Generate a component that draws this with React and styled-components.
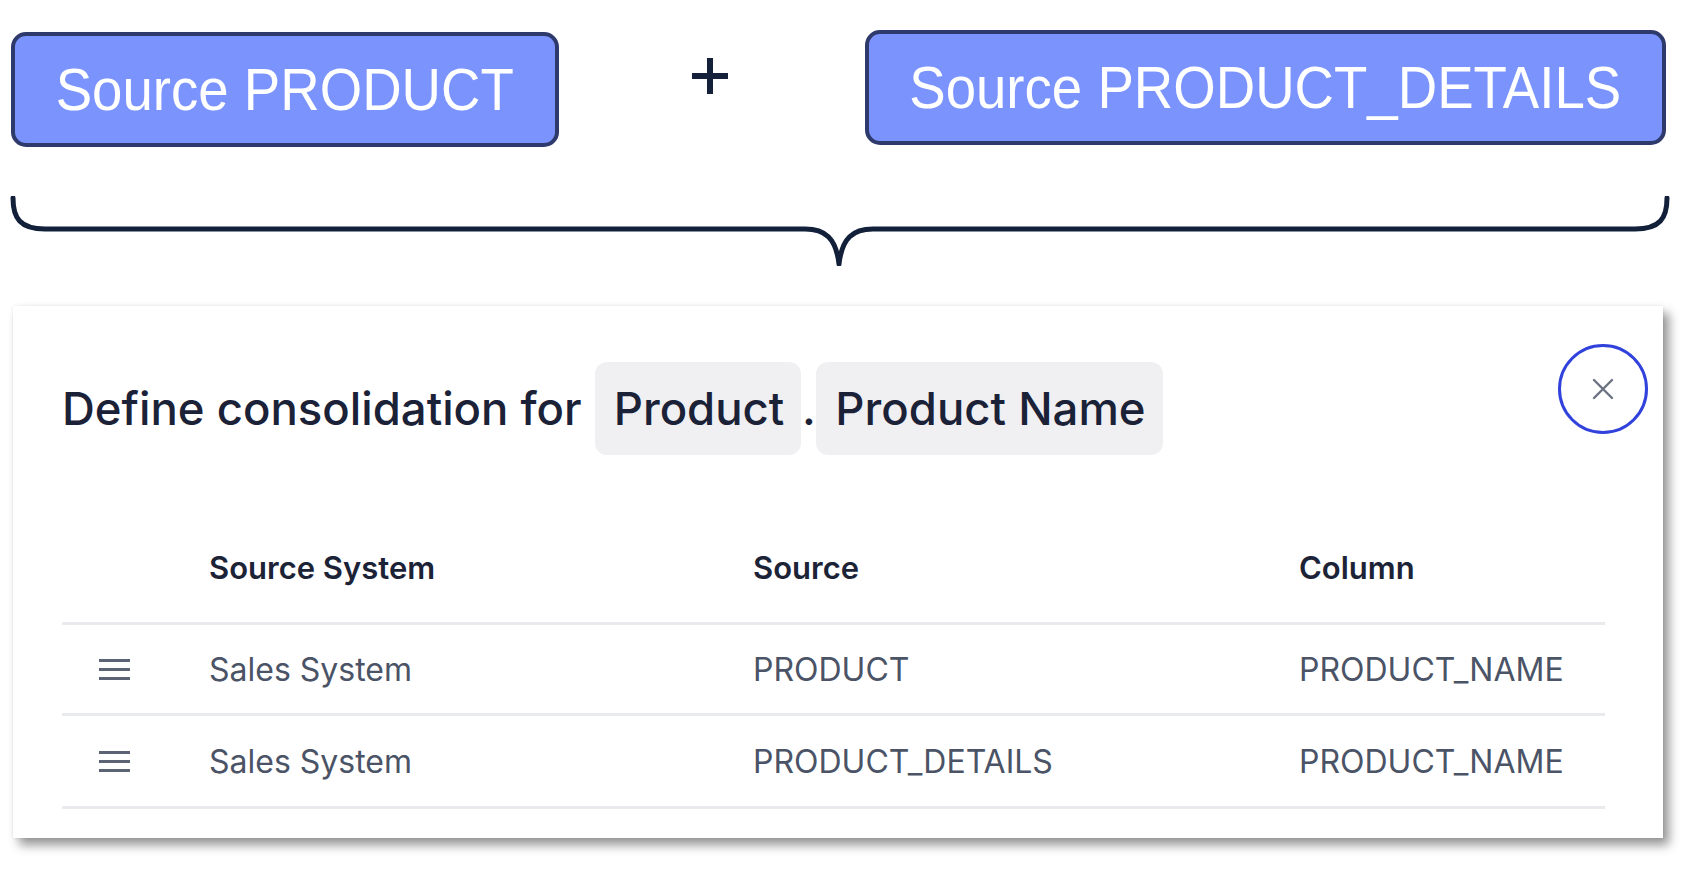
import React from 'react';
import styled, { createGlobalStyle } from 'styled-components';

const GlobalStyle = createGlobalStyle`
    body {
        margin: 0;
        background: #ffffff;
        font-family: Inter, "Noto Sans", sans-serif;
    }
`;

const Page = styled.div`
    width: 1695px;
    height: 870px;
    overflow: hidden;
    display: flex;
    flex-direction: column;
    padding-top: 30px;
    box-sizing: border-box;
`;

const SourceRow = styled.div`
    display: flex;
    align-items: flex-start;
    padding: 0 29px 0 11px;
`;

const SourceBox = styled.div`
    box-sizing: border-box;
    width: ${p => p.$width}px;
    height: 115px;
    margin-top: ${p => p.$offset || 0}px;
    border: 4px solid #2f3a6c;
    border-radius: 15px;
    background: #7b93fd;
    display: flex;
    align-items: center;
    justify-content: center;
    overflow: hidden;
`;

const SourceLabel = styled.span`
    display: inline-block;
    font-family: "Liberation Sans", Arial, sans-serif;
    font-size: 60px;
    line-height: 1;
    color: #ffffff;
    white-space: nowrap;
    transform: scaleX(0.91);
`;

const PlusSlot = styled.div`
    flex: 1;
    display: flex;
    justify-content: center;
    padding-top: 28px;
    padding-right: 4px;
`;

const Plus = styled.div`
    position: relative;
    width: 36px;
    height: 36px;

    &::before,
    &::after {
        content: '';
        position: absolute;
        background: #15203a;
    }
    &::before {
        left: 0;
        right: 0;
        top: 15px;
        height: 6px;
    }
    &::after {
        top: 0;
        bottom: 0;
        left: 15px;
        width: 6px;
    }
`;

const Brace = styled.svg`
    display: block;
    margin: 49px 0 0 10px;
`;

const Card = styled.div`
    position: relative;
    box-sizing: border-box;
    margin: 40px 0 0 13px;
    width: 1650px;
    height: 532px;
    background: #ffffff;
    padding: 56px 58px 0 49px;
    box-shadow: 6px 7px 10px rgba(0, 0, 0, 0.42), 0 0 3px rgba(0, 0, 0, 0.08);
`;

const TitleRow = styled.div`
    display: flex;
    align-items: center;
    height: 93px;
    font-size: 45.5px;
    font-weight: 500;
    color: #1b2237;
`;

const TitleText = styled.span`
    margin-right: 13px;
`;

const Chip = styled.span`
    display: flex;
    align-items: center;
    height: 93px;
    padding: 0 17px 0 19px;
    border-radius: 12px;
    background: #f0f0f2;
`;

const Dot = styled.span`
    width: 15px;
    text-align: center;
`;

const CloseButton = styled.button`
    position: absolute;
    top: 38px;
    right: 15px;
    width: 90px;
    height: 90px;
    border: 3px solid #3142dc;
    border-radius: 50%;
    background: #ffffff;
    display: flex;
    align-items: center;
    justify-content: center;
    padding: 0;
`;

const Table = styled.div`
    margin-top: 58px;
`;

const Row = styled.div`
    display: grid;
    grid-template-columns: 147px 544px 546px 1fr;
    align-items: center;
    height: ${p => p.$height}px;
    border-bottom: 3px solid #e9eaed;
    box-sizing: border-box;
    font-size: ${p => (p.$head ? 31 : 32)}px;
    font-weight: ${p => (p.$head ? 600 : 400)};
    color: ${p => (p.$head ? '#1c2336' : '#4b5366')};
`;

const Handle = styled.div`
    display: flex;
    flex-direction: column;
    gap: 6px;
    width: 31px;
    margin-left: 37px;

    span {
        display: block;
        height: 3px;
        background: #5b6375;
    }
`;

const rows = [
    { system: 'Sales System', source: 'PRODUCT', column: 'PRODUCT_NAME', height: 91 },
    { system: 'Sales System', source: 'PRODUCT_DETAILS', column: 'PRODUCT_NAME', height: 93 },
];

function App() {
    return (
        <Page>
            <GlobalStyle />
            <SourceRow>
                <SourceBox $width={548} $offset={2}>
                    <SourceLabel>Source PRODUCT</SourceLabel>
                </SourceBox>
                <PlusSlot>
                    <Plus />
                </PlusSlot>
                <SourceBox $width={801}>
                    <SourceLabel>Source PRODUCT_DETAILS</SourceLabel>
                </SourceBox>
            </SourceRow>

            <Brace width="1662" height="70" viewBox="0 0 1662 70">
                <path
                    d="M3 2 C3 22 10 33 35 33 L795 33 C815 33 826 42 829 68 M829 68 C832 42 843 33 863 33 L1625 33 C1650 33 1657 22 1657 2"
                    fill="none"
                    stroke="#13203a"
                    strokeWidth="5"
                    strokeLinecap="round"
                />
            </Brace>

            <Card>
                <TitleRow>
                    <TitleText>Define consolidation for</TitleText>
                    <Chip>Product</Chip>
                    <Dot>.</Dot>
                    <Chip>Product Name</Chip>
                </TitleRow>
                <CloseButton>
                    <svg width="24" height="24" viewBox="0 0 24 24">
                        <path d="M3 3 L21 21 M21 3 L3 21" stroke="#6b7280" strokeWidth="2.4" strokeLinecap="round" />
                    </svg>
                </CloseButton>

                <Table>
                    <Row $head $height={112}>
                        <div />
                        <div>Source System</div>
                        <div>Source</div>
                        <div>Column</div>
                    </Row>
                    {rows.map((r, i) => (
                        <Row key={i} $height={r.height}>
                            <Handle>
                                <span />
                                <span />
                                <span />
                            </Handle>
                            <div>{r.system}</div>
                            <div>{r.source}</div>
                            <div>{r.column}</div>
                        </Row>
                    ))}
                </Table>
            </Card>
        </Page>
    );
}

export default App;
